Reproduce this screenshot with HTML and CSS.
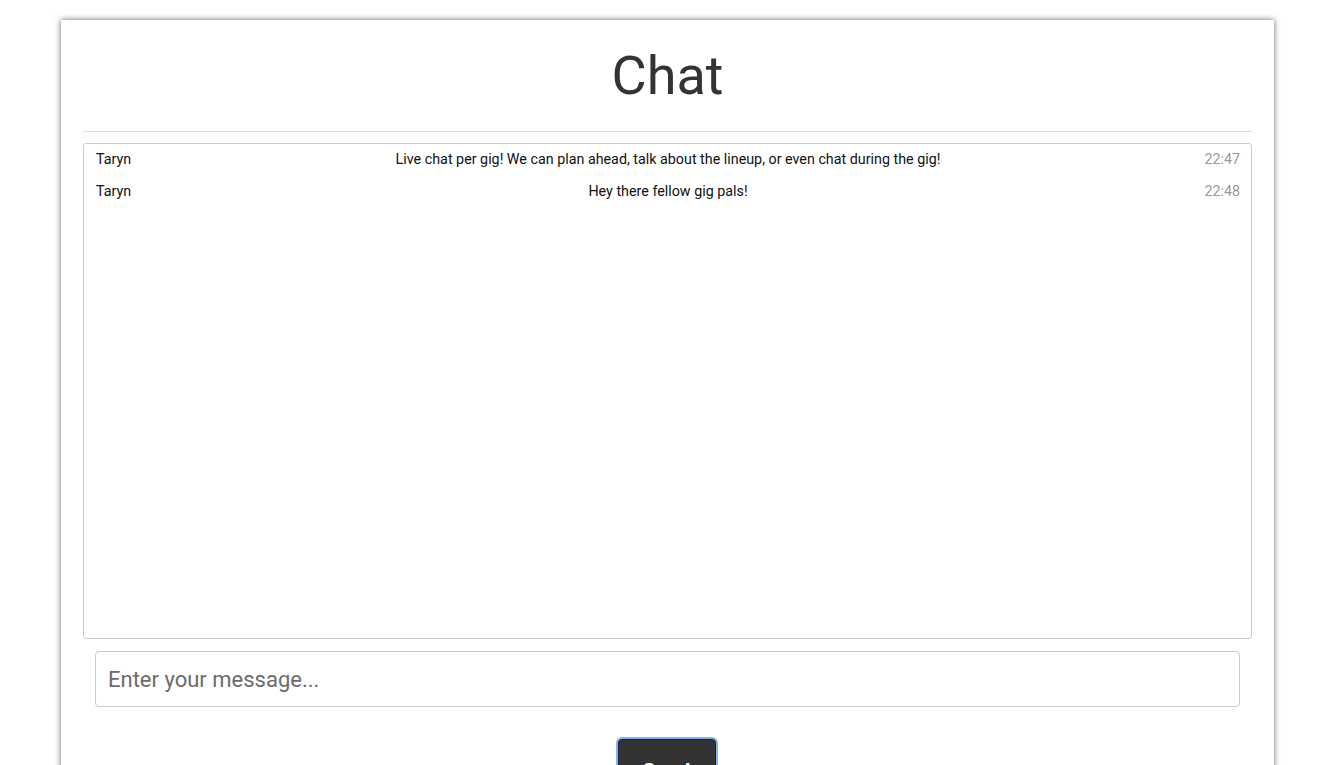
FILE: index.html
```html
<!DOCTYPE html>
<html>
<head>
<meta charset="utf-8">
<link rel="stylesheet" href="styles.css">
</head>
<body>
<div class="card">
  <h1 class="title">Chat</h1>
  <hr class="rule">
  <div class="messages">
    <div class="msg"><span class="name">Taryn</span><span class="text">Live chat per gig! We can plan ahead, talk about the lineup, or even chat during the gig!</span><span class="time">22:47</span></div>
    <div class="msg"><span class="name">Taryn</span><span class="text">Hey there fellow gig pals!</span><span class="time">22:48</span></div>
  </div>
  <form class="composer">
    <input class="input" type="text" placeholder="Enter your message...">
    <div class="actions"><button class="send" type="button">Send</button></div>
  </form>
</div>
</body>
</html>
```

FILE: styles.css
```css
html, body {
  margin: 0;
  padding: 0;
  background: #fff;
  font-family: Roboto, "Helvetica Neue", Arial, sans-serif;
  color: #333;
  overflow: hidden;
  height: 765px;
}
body {
  padding: 20px 61px 0 61px;
}
.card {
  background: #fff;
  box-shadow: 0 0 6px rgba(0,0,0,0.6);
  padding: 0 22px 40px 22px;
  height: 900px;
}
.title {
  margin: 0;
  padding-top: 24px;
  height: 111px;
  box-sizing: border-box;
  text-align: center;
  font-weight: 400;
  font-size: 54px;
  line-height: 64px;
  color: #333;
}
.rule {
  margin: 0 0 11px 0;
  border: 0;
  border-top: 1px solid #ddd;
  height: 0;
}
.messages {
  border: 1px solid #ccc;
  border-radius: 3px;
  height: 494px;
}
.msg {
  display: flex;
  align-items: center;
  padding: 5px 11px 7px 12px;
  font-size: 14.3px;
  line-height: 20px;
  color: #111;
}
.name {
  width: 120px;
}
.text {
  flex: 1;
  text-align: center;
}
.time {
  width: 120px;
  text-align: right;
  color: #999;
}
.composer {
  padding: 12px 12px 0 12px;
}
.input {
  display: block;
  width: 100%;
  box-sizing: border-box;
  height: 56px;
  border: 1px solid #ccc;
  border-radius: 4px;
  padding: 0 12px;
  font-family: Roboto, Arial, sans-serif;
  font-size: 22px;
  color: #333;
  outline: none;
}
.input::placeholder {
  color: #6b6b6b;
}
.actions {
  display: flex;
  justify-content: center;
  padding-top: 32px;
}
.send {
  width: 96px;
  height: 46px;
  margin-left: -2px;
  padding: 8px 0 0 0;
  box-sizing: content-box;
  background: #333;
  color: #fff;
  border: 1px solid #222;
  border-radius: 4px;
  font-family: Roboto, Arial, sans-serif;
  font-weight: 700;
  font-size: 21px;
  line-height: 46px;
  box-shadow: 0 0 0 2px #7fb4f5;
}
```
